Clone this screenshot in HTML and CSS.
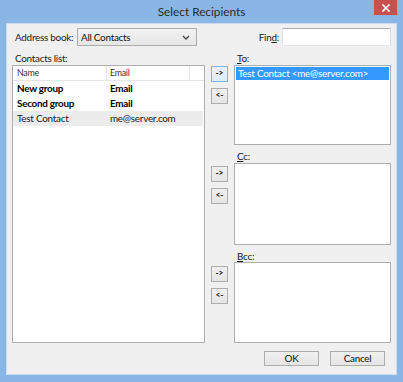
FILE: index.html
```html
<!DOCTYPE html>
<html>
<head>
<meta charset="utf-8">
<link rel="stylesheet" href="styles.css">
</head>
<body>
<div class="window">
  <div class="titlebar">
    <span></span>
    <span class="title">Select Recipients</span>
    <span class="close-wrap">
      <span class="close">
        <svg width="8" height="8" viewBox="0 0 8 8"><path d="M1 1 L7 7 M7 1 L1 7" stroke="#fff" stroke-width="1.6" stroke-linecap="square"/></svg>
      </span>
    </span>
  </div>
  <div class="client">
    <div class="toprow">
      <span class="ab-label">Address book:</span>
      <div class="select">
        <span>All Contacts</span>
        <svg width="8" height="5" viewBox="0 0 8 5"><path d="M1 1 L4 4 L7 1" fill="none" stroke="#444" stroke-width="1.3"/></svg>
      </div>
      <span class="spacer"></span>
      <span class="find-label">Fin<u>d</u>:</span>
      <div class="input"></div>
    </div>
    <div class="main">
      <div class="left">
        <div class="lbl">Contacts list:</div>
        <div class="listbox">
          <div class="hdr">
            <span class="c1">Name</span><span class="c2">Email</span><span class="c3"></span>
          </div>
          <div class="row bold"><span class="c1">New group</span><span class="c2">Email</span></div>
          <div class="row bold"><span class="c1">Second group</span><span class="c2">Email</span></div>
          <div class="row sel"><span class="c1">Test Contact</span><span class="c2">me@server.com</span></div>
        </div>
      </div>
      <div class="right">
        <div class="section s-to">
          <div class="btns">
            <div class="sbtn focus">-&gt;</div>
            <div class="sbtn">&lt;-</div>
          </div>
          <div class="fld">
            <div class="lbl"><u>T</u>o:</div>
            <div class="box">
              <div class="item">Test Contact &lt;me@server.com&gt;</div>
            </div>
          </div>
        </div>
        <div class="section s-cc">
          <div class="btns">
            <div class="sbtn">-&gt;</div>
            <div class="sbtn">&lt;-</div>
          </div>
          <div class="fld">
            <div class="lbl"><u>C</u>c:</div>
            <div class="box"></div>
          </div>
        </div>
        <div class="section s-bcc">
          <div class="btns">
            <div class="sbtn">-&gt;</div>
            <div class="sbtn">&lt;-</div>
          </div>
          <div class="fld">
            <div class="lbl"><u>B</u>cc:</div>
            <div class="box"></div>
          </div>
        </div>
      </div>
    </div>
    <div class="bottom">
      <div class="btn">OK</div>
      <div class="btn">Cancel</div>
    </div>
  </div>
</div>
</body>
</html>
```
FILE: styles.css
```css
* { box-sizing: border-box; }
html, body { margin: 0; padding: 0; }
body {
  width: 403px;
  height: 382px;
  overflow: hidden;
  font-family: "Lato", "Liberation Sans", sans-serif;
  font-size: 9.9px;
  letter-spacing: -0.25px;
  color: #1a1a1a;
  white-space: nowrap;
}
.window {
  width: 403px;
  height: 382px;
  background: #8ab6e5;
  display: flex;
  flex-direction: column;
}
.titlebar {
  height: 23px;
  display: grid;
  grid-template-columns: 1fr auto 1fr;
  align-items: start;
}
.title {
  font-size: 11.8px;
  letter-spacing: 0;
  color: #2a2a2a;
  line-height: 23px;
}
.close-wrap { display: flex; justify-content: flex-end; padding-right: 6px; }
.close {
  width: 23px;
  height: 15px;
  background: #c75050;
  display: flex;
  align-items: center;
  justify-content: center;
}
.client {
  margin: 0 6px 7px 6px;
  height: 352px;
  background: #f0f0f0;
  border: 1px solid #c9dcf0;
  display: flex;
  flex-direction: column;
}
.toprow {
  margin-top: 4px;
  height: 18px;
  display: flex;
  align-items: center;
  padding: 0 5px 0 8px;
}
.ab-label { width: 62px; }
.select {
  width: 120px;
  height: 18px;
  border: 1px solid #acacac;
  background: linear-gradient(#f2f2f2, #e6e6e6);
  display: flex;
  align-items: center;
  justify-content: space-between;
  padding: 0 6px 0 3px;
  color: #111;
}
.spacer { flex: 1; }
.find-label { margin-right: 3px; }
.input {
  width: 109px;
  height: 18px;
  background: #fff;
  border: 1px solid #abadb3;
  border-color: #abadb3 #dbdfe6 #e3e9ef #e2e3ea;
}
.main {
  margin-top: 2px;
  display: flex;
  gap: 6px;
  padding: 0 5px;
}
.left { width: 193px; }
.lbl { height: 17px; line-height: 21px; padding-left: 3px; }
.listbox {
  height: 278px;
  background: #fff;
  border: 1px solid #adadad;
}
.hdr {
  height: 15px;
  display: flex;
  border-bottom: 1px solid #e5e5e5;
  font-size: 8.8px;
  color: #333;
  line-height: 14px;
}
.hdr .c1 { border-right: 1px solid #e5e5e5; }
.hdr .c2 { width: 83px; border-right: 1px solid #e5e5e5; }
.c1 { width: 94px; padding-left: 4px; }
.c2 { padding-left: 3px; }
.row {
  height: 15px;
  line-height: 15px;
  display: flex;
}
.bold { font-weight: bold; color: #000; }
.sel { background: #ececec; margin-right: 1px; }
.right {
  width: 180px;
  display: flex;
  flex-direction: column;
}
.section { display: flex; gap: 6px; }
.btns {
  width: 17px;
  display: flex;
  flex-direction: column;
  gap: 6px;
  padding-top: 18px;
}
.s-cc .btns { padding-top: 21px; }
.s-bcc .btns { padding-top: 21px; }
.sbtn {
  width: 17px;
  height: 16px;
  border: 1px solid #adadad;
  background: linear-gradient(#f0f0f0, #e5e5e5);
  font-size: 8.5px;
  font-weight: bold;
  letter-spacing: 0;
  line-height: 13px;
  text-align: center;
  color: #222;
}
.sbtn.focus { border-color: #7eb4ea; background: linear-gradient(#eaf3fc, #dcecfc); }
.fld { width: 157px; }
.box {
  background: #fff;
  border: 1px solid #adadad;
  padding: 1px;
}
.s-to .box { height: 80px; }
.s-cc .lbl { height: 18px; line-height: 23px; }
.s-bcc .lbl { line-height: 22px; }
.s-cc .box { height: 82px; }
.s-bcc .box { height: 81px; }
.item {
  background: #3399ff;
  color: #fff;
  height: 13px;
  line-height: 13px;
  padding-left: 2px;
}
.bottom {
  margin-top: 8px;
  display: flex;
  justify-content: flex-end;
  gap: 11px;
  padding-right: 11px;
}
.btn {
  width: 55px;
  height: 15px;
  border: 1px solid #adadad;
  background: linear-gradient(#f0f0f0, #e5e5e5);
  text-align: center;
  line-height: 13px;
  color: #111;
}
```
